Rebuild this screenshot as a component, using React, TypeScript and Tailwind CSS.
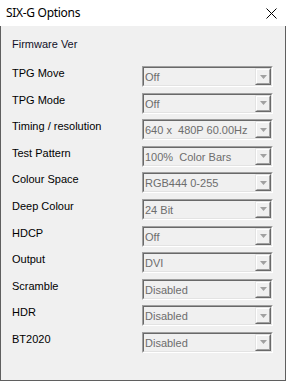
import React from "react";

const rows: [string, string][] = [
  ["TPG Move", "Off"],
  ["TPG Mode", "Off"],
  ["Timing / resolution", "640 x\u00a0\u00a0480P 60.00Hz"],
  ["Test Pattern", "100%\u00a0\u00a0Color Bars"],
  ["Colour Space", "RGB444 0-255"],
  ["Deep Colour", "24 Bit"],
  ["HDCP", "Off"],
  ["Output", "DVI"],
  ["Scramble", "Disabled"],
  ["HDR", "Disabled"],
  ["BT2020", "Disabled"],
];

function Combo({ value }: { value: string }) {
  return (
    <div className="w-[131px] h-[21px] border-t border-l border-b border-r border-t-[#a0a0a0] border-l-[#a0a0a0] border-b-white border-r-white">
      <div className="h-full flex items-stretch border border-t-[#696969] border-l-[#696969] border-b-[#e3e3e3] border-r-[#e3e3e3] bg-[#f0f0f0]">
        <div className="flex-1 pl-[1px] pt-[1px] text-[11px] leading-[17px] text-[#6d6d6d] whitespace-nowrap overflow-hidden">
          {value}
        </div>
        <div className="w-[16px] border border-t-[#e3e3e3] border-l-[#e3e3e3] border-b-[#696969] border-r-[#696969]">
          <div className="h-full flex items-center justify-center border border-t-white border-l-white border-b-[#a0a0a0] border-r-[#a0a0a0] bg-[#f0f0f0]">
            <svg width="7" height="4" viewBox="0 0 7 4">
              <polygon points="0,0 7,0 3.5,4" fill="#a0a0a0" />
            </svg>
          </div>
        </div>
      </div>
    </div>
  );
}

export default function App() {
  return (
    <div
      className="w-[286px] h-[381px] flex flex-col bg-white"
      style={{ fontFamily: '"Liberation Sans", Arial, sans-serif' }}
    >
      <div className="h-[26px] flex items-center justify-between pl-[6px] pr-[9px] bg-white">
        <span
          className="text-[12px] text-black tracking-[-0.3px]"
          style={{ fontFamily: '"Noto Sans", "Liberation Sans", sans-serif' }}
        >
          SIX-G Options
        </span>
        <svg width="11" height="11" viewBox="0 0 11 11">
          <path d="M0.5 0.5 L10.5 10.5 M10.5 0.5 L0.5 10.5" stroke="#000" strokeWidth="1" />
        </svg>
      </div>
      <div className="flex-1 bg-[#f0f0f0] border-l border-r border-b border-[#5f5f5f] pl-[11px] pt-[11px]">
        <div className="text-[11px] leading-[14px] text-[#101028] h-[14px]">Firmware Ver</div>
        <div className="mt-[15px] flex flex-col gap-[5.6px]">
          {rows.map(([label, value]) => (
            <div key={label} className="flex h-[21px]">
              <div className="w-[130px] text-[11px] leading-[14px] text-black whitespace-nowrap">
                {label}
              </div>
              <Combo value={value} />
            </div>
          ))}
        </div>
      </div>
    </div>
  );
}
